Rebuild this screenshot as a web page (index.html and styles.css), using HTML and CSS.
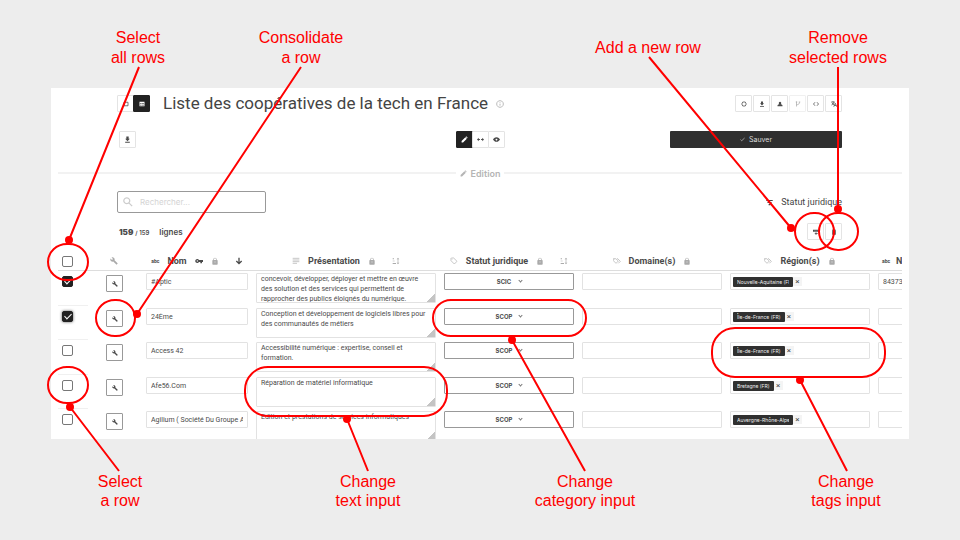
FILE: index.html
```html
<!DOCTYPE html>
<html lang="fr">
<head>
<meta charset="utf-8">
<meta name="viewport" content="width=device-width, initial-scale=1">
<title>Liste des coopératives de la tech en France</title>
<link rel="stylesheet" href="styles.css">
</head>
<body>
<svg class="defs" aria-hidden="true">
  <symbol id="wrench" viewBox="0 0 24 24"><path d="M22.7 19l-9.1-9.1c.9-2.3.4-5-1.5-6.9-2-2-5-2.4-7.4-1.3L9 6 6 9 1.6 4.7C.4 7.1.9 10.1 2.900 12.100c1.900 1.900 4.600 2.400 6.900 1.500l9.100 9.100c.4.4 1 .4 1.400 0l2.300-2.300c.5-.4.5-1.100.1-1.400z"/></symbol>
  <symbol id="lock" viewBox="0 0 24 24"><path fill-rule="evenodd" d="M18 9h-1V7A5 5 0 0 0 7 7v2H6a2 2 0 0 0-2 2v10a2 2 0 0 0 2 2h12a2 2 0 0 0 2-2V11a2 2 0 0 0-2-2zM9 7a3 3 0 0 1 6 0v2H9zm1 7h4v1h-4zm0 3h4v1h-4z"/></symbol>
  <symbol id="tag" viewBox="0 0 24 24"><path fill="none" stroke="currentColor" stroke-width="2" d="M3 4v7l10 10 8-8L11 3H4zM7 7v1"/></symbol>
  <symbol id="tags" viewBox="0 0 24 24"><path fill="none" stroke="currentColor" stroke-width="2" d="M1 5v6l8 8 7-7-8-7zM12 5h2l8 8-6 6M5 8v1"/></symbol>
  <symbol id="sort" viewBox="0 0 24 24"><path d="M2 4h4v3H2zM2 11h6v2H2zM2 18h10v3H2zM17 7h-3l4-5 4 5h-3v10h3l-4 5-4-5h3z"/></symbol>
  <symbol id="pencil" viewBox="0 0 24 24"><path d="M2 22v-5L15 4l5 5L7 22zM16 3l2-2 5 5-2 2z"/></symbol>
  <symbol id="download" viewBox="0 0 24 24"><path d="M8 2h8v7h4l-8 9-8-9h4zM4 20h16v3H4z"/></symbol>
</svg>
<main class="board">
  <section class="panel">
    <header class="bar">
      <div class="group">
        <button class="sq" aria-label="Cartes"><svg viewBox="0 0 24 24"><path fill="none" stroke="currentColor" stroke-width="3" d="M4 5h16v14H4z"/></svg></button>
        <button class="sq dark" aria-label="Tableau"><svg viewBox="0 0 24 24"><path fill-rule="evenodd" d="M2 3h20v18H2zM5 9h5v3H5zm8 0h6v3h-6zm-8 6h5v3H5zm8 0h6v3h-6z"/></svg></button>
      </div>
      <h1>Liste des coopératives de la tech en France</h1>
      <svg class="info" viewBox="0 0 24 24"><path fill="none" stroke="currentColor" stroke-width="3" d="M12 2a10 10 0 1 0 .1 0zM12 7v2m0 2v6"/></svg>
      <div class="actions">
        <button class="sq" aria-label="Plateforme"><svg viewBox="0 0 24 24"><path fill="none" stroke="currentColor" stroke-width="3" d="M7 4h10l4 8-4 8H7l-4-8z"/></svg></button>
        <button class="sq" aria-label="Télécharger"><svg><use href="#download"/></svg></button>
        <button class="sq" aria-label="Utilisateur"><svg viewBox="0 0 24 24"><path d="M12 3a5 5 0 1 0 .1 0zM2 21v-3c0-3 5-5 10-5s10 2 10 5v3z"/></svg></button>
        <button class="sq faint" aria-label="Source"><svg viewBox="0 0 24 24"><path fill="none" stroke="currentColor" stroke-width="3" d="M6 2v20M6 15c8 0 11-3 12-10M15 4h6M3 4h6"/></svg></button>
        <button class="sq" aria-label="Intégrer"><svg viewBox="0 0 24 24"><path fill="none" stroke="currentColor" stroke-width="3" d="M8 5l-6 7 6 7M16 5l6 7-6 7"/></svg></button>
        <button class="sq" aria-label="Traduire"><svg viewBox="0 0 24 24"><path fill="none" stroke="currentColor" stroke-width="3" d="M1 4h14M8 1v3M12 4c-1 6-5 10-10 12M4 7c2 4 5 7 8 8M11 23l6-14 6 14M13 18h8"/></svg></button>
      </div>
    </header>

    <div class="bar modes">
      <div><button class="sq" aria-label="Importer"><svg><use href="#download"/></svg></button></div>
      <div class="group">
        <button class="sq dark" aria-label="Éditer"><svg><use href="#pencil"/></svg></button>
        <button class="sq" aria-label="Comparer"><svg viewBox="0 0 24 24"><path d="M0 12l6-6v4h4v4H6v4zM24 12l-6-6v4h-4v4h4v4z"/></svg></button>
        <button class="sq" aria-label="Aperçu"><svg viewBox="0 0 24 24"><path fill-rule="evenodd" d="M12 4C6 4 2 8 0 12c2 4 6 8 12 8s10-4 12-8c-2-4-6-8-12-8zm0 5a3 3 0 1 1-.1 0z"/></svg></button>
      </div>
      <button class="save"><svg viewBox="0 0 24 24"><path fill="none" stroke="currentColor" stroke-width="3" d="M2 12l6 6L22 5"/></svg>Sauver</button>
    </div>

    <div class="divider"><svg><use href="#pencil"/></svg><span>Edition</span></div>

    <div class="bar tools">
      <label class="search"><svg viewBox="0 0 24 24"><path fill="none" stroke="currentColor" stroke-width="3" d="M9 2a7 7 0 1 0 .1 0zM14 14l8 8"/></svg><input type="search" placeholder="Rechercher..." aria-label="Rechercher"></label>
      <a class="filter" href="#"><svg viewBox="0 0 24 24"><path d="M1 3h22v4H1zM5 10h14v4H5zM9 17h6v4H9z"/></svg>Statut juridique</a>
    </div>

    <div class="bar count">
      <p><b>159</b> <small>/ 159</small> <span>lignes</span></p>
      <div class="actions">
        <button class="sq" aria-label="Ajouter une ligne"><svg viewBox="0 0 24 24"><path d="M0 3h24v8H0zM10 14h4v3h5v3h-5v3h-4v-3H7v-3h3z"/><path fill="none" stroke="#fff" d="M8 3v8M16 3v8"/></svg></button>
        <button class="sq" aria-label="Supprimer les lignes"><svg viewBox="0 0 24 24"><path d="M4 3h5l1-2h4l1 2h5v3H4zM5 7h14v16H5z"/></svg></button>
      </div>
    </div>

    <div class="viewport">
    <table>
      <colgroup><col class="c-check"><col class="c-tool"><col class="c-name"><col class="c-text"><col class="c-status"><col class="c-tags"><col class="c-tags"><col></colgroup>
      <thead>
        <tr>
          <th class="check"><input type="checkbox" aria-label="Tout sélectionner"></th>
          <th class="tool"><svg class="pale"><use href="#wrench"/></svg></th>
          <th><div class="head"><i>abc</i>Nom<svg viewBox="0 0 24 24"><path fill-rule="evenodd" d="M7 6a6 6 0 1 0 5 9h4v4h5v-4h3V9H12a6 6 0 0 0-5-3zm0 4a2 2 0 1 1-.1 0z"/></svg><svg class="pale lock"><use href="#lock"/></svg><svg class="far" viewBox="0 0 24 24"><path fill="none" stroke="currentColor" stroke-width="4" d="M12 2v18M4 12l8 8 8-8"/></svg></div></th>
          <th><div class="head"><svg class="pale" viewBox="0 0 24 24"><path fill="none" stroke="currentColor" stroke-width="2" d="M2 4h20M2 9h20M2 14h20M2 19h13"/></svg>Présentation<svg class="pale lock"><use href="#lock"/></svg><svg class="pale far"><use href="#sort"/></svg></div></th>
          <th><div class="head"><svg class="pale"><use href="#tag"/></svg>Statut juridique<svg class="pale lock"><use href="#lock"/></svg><svg class="pale far"><use href="#sort"/></svg></div></th>
          <th><div class="head"><svg class="pale"><use href="#tags"/></svg>Domaine(s)<svg class="pale lock"><use href="#lock"/></svg></div></th>
          <th><div class="head"><svg class="pale"><use href="#tags"/></svg>Région(s)<svg class="pale lock"><use href="#lock"/></svg></div></th>
          <th><div class="head cut"><i>abc</i>N</div></th>
        </tr>
      </thead>
      <tbody>
        <tr>
          <td class="check"><input type="checkbox" checked aria-label="Sélectionner #Aptic"></td>
          <td class="tool"><button aria-label="Consolider"><svg><use href="#wrench"/></svg></button></td>
          <td><input class="field" value="#Aptic" aria-label="Nom"></td>
          <td><textarea aria-label="Présentation">concevoir, développer, déployer et mettre en œuvre
des solution et des services qui permettent de
rapprocher des publics éloignés du numérique.</textarea></td>
          <td><div class="pick"><select aria-label="Statut juridique"><option>SCIC</option></select></div></td>
          <td><input class="field" aria-label="Domaines"></td>
          <td><div class="field tagbox"><span class="tag">Nouvelle-Aquitaine (FR)</span><button aria-label="Retirer">×</button></div></td>
          <td><input class="field wide" value="84373" aria-label="Numéro"></td>
        </tr>
        <tr>
          <td class="check"><input class="focus" type="checkbox" checked aria-label="Sélectionner 24Ème"></td>
          <td class="tool"><button aria-label="Consolider"><svg><use href="#wrench"/></svg></button></td>
          <td><input class="field" value="24Ème" aria-label="Nom"></td>
          <td><textarea aria-label="Présentation">Conception et développement de logiciels libres pour
des communautés de métiers</textarea></td>
          <td><div class="pick"><select aria-label="Statut juridique"><option>SCOP</option></select></div></td>
          <td><input class="field" aria-label="Domaines"></td>
          <td><div class="field tagbox"><span class="tag">Île-de-France (FR)</span><button aria-label="Retirer">×</button></div></td>
          <td><input class="field wide" aria-label="Numéro"></td>
        </tr>
        <tr>
          <td class="check"><input type="checkbox" aria-label="Sélectionner Access 42"></td>
          <td class="tool"><button aria-label="Consolider"><svg><use href="#wrench"/></svg></button></td>
          <td><input class="field" value="Access 42" aria-label="Nom"></td>
          <td><textarea aria-label="Présentation">Accessibilité numérique : expertise, conseil et
formation.</textarea></td>
          <td><div class="pick"><select aria-label="Statut juridique"><option>SCOP</option></select></div></td>
          <td><input class="field" aria-label="Domaines"></td>
          <td><div class="field tagbox"><span class="tag">Île-de-France (FR)</span><button aria-label="Retirer">×</button></div></td>
          <td><input class="field wide" aria-label="Numéro"></td>
        </tr>
        <tr>
          <td class="check"><input type="checkbox" aria-label="Sélectionner Afe56.Com"></td>
          <td class="tool"><button aria-label="Consolider"><svg><use href="#wrench"/></svg></button></td>
          <td><input class="field" value="Afe56.Com" aria-label="Nom"></td>
          <td><textarea aria-label="Présentation">Réparation de matériel informatique</textarea></td>
          <td><div class="pick"><select aria-label="Statut juridique"><option>SCOP</option></select></div></td>
          <td><input class="field" aria-label="Domaines"></td>
          <td><div class="field tagbox"><span class="tag">Bretagne (FR)</span><button aria-label="Retirer">×</button></div></td>
          <td><input class="field wide" aria-label="Numéro"></td>
        </tr>
        <tr>
          <td class="check"><input type="checkbox" aria-label="Sélectionner Agilium"></td>
          <td class="tool"><button aria-label="Consolider"><svg><use href="#wrench"/></svg></button></td>
          <td><input class="field" value="Agilium ( Société Du Groupe A" aria-label="Nom"></td>
          <td><textarea aria-label="Présentation">Edition et prestations de services informatiques</textarea></td>
          <td><div class="pick"><select aria-label="Statut juridique"><option>SCOP</option></select></div></td>
          <td><input class="field" aria-label="Domaines"></td>
          <td><div class="field tagbox"><span class="tag">Auvergne-Rhône-Alpes</span><button aria-label="Retirer">×</button></div></td>
          <td><input class="field wide" aria-label="Numéro"></td>
        </tr>
      </tbody>
    </table>
    </div>
  </section>

  <!-- Callouts drawn over the panel -->
  <svg class="callouts" viewBox="0 0 960 540" lang="en">
    <g class="rings">
      <rect x="48" y="244" width="40" height="36" rx="19"/>
      <rect x="96" y="300" width="39" height="36" rx="19"/>
      <rect x="795" y="213" width="39" height="37" rx="19"/>
      <rect x="819" y="213" width="39" height="37" rx="19"/>
      <rect x="48" y="367" width="40" height="36" rx="19"/>
      <rect x="433" y="300" width="153" height="36" rx="18"/>
      <rect x="245" y="367" width="202" height="49" rx="23"/>
      <rect x="712" y="328" width="173" height="49" rx="23"/>
      <path d="M139 67L69 240M301 67L137 314M649 57L791 228M838 67V208M70 407L119 471M347 419L368 471M512 340L585 471M800 380L847 471"/>
    </g>
    <g class="dots">
      <circle cx="69" cy="240" r="4"/><circle cx="137" cy="314" r="4"/><circle cx="791" cy="228" r="4"/><circle cx="838" cy="209" r="4"/>
      <circle cx="70" cy="407" r="4"/><circle cx="347" cy="419" r="4"/><circle cx="512" cy="340" r="4"/><circle cx="800" cy="380" r="4"/>
    </g>
    <g class="notes">
      <text x="138" y="43">Select</text><text x="138" y="63">all rows</text>
      <text x="301" y="43">Consolidate</text><text x="301" y="63">a row</text>
      <text x="648" y="53">Add a new row</text>
      <text x="838" y="43">Remove</text><text x="838" y="63">selected rows</text>
      <text x="120" y="487">Select</text><text x="120" y="506">a row</text>
      <text x="368" y="487">Change</text><text x="368" y="506">text input</text>
      <text x="585" y="487">Change</text><text x="585" y="506">category input</text>
      <text x="846" y="487">Change</text><text x="846" y="506">tags input</text>
    </g>
  </svg>
</main>
</body>
</html>
```
FILE: styles.css
```css
*, *::before, *::after { box-sizing: border-box; }

body {
  margin: 0;
  background: #ededed;
  color: #4a4a4a;
  font-family: Inter, "Liberation Sans", sans-serif;
  font-size: 8px;
}

button, input, select, textarea { font-family: inherit; color: inherit; margin: 0; padding: 0; }
svg { fill: currentColor; }
h1, p { margin: 0; }

.defs { display: none; }

.board { position: relative; padding: 88px 51px; }
.panel { background: #fff; padding: 7px 7px 0; }

.bar { display: flex; align-items: center; padding: 0 60px 0 59px; }
.group { display: flex; }
.actions { display: flex; gap: 1px; margin-left: auto; }

.sq {
  display: flex; align-items: center; justify-content: center;
  width: 17px; height: 17px;
  background: #fff; border: 1px solid #e4e4e4; border-radius: 1px;
}
.group .sq + .sq { margin-left: -1px; }
.sq svg { width: 6px; height: 6px; }
.sq.dark { background: #222; border-color: #222; color: #fff; }
.sq.faint { color: #aaa; border-color: #f0f0f0; }

h1 { margin-left: 13px; font-family: Roboto, "Liberation Sans", sans-serif; font-size: 17px; line-height: 17px; font-weight: 400; color: #444; }
.info { width: 8px; height: 8px; margin-left: 8px; color: #bbb; }

.modes { display: grid; grid-template-columns: 1fr auto 1fr; margin-top: 19px; padding-left: 61px; padding-right: 60px; }
.modes .group { margin-left: -1px; }
.modes .sq svg { width: 7px; height: 7px; }
.save {
  display: flex; align-items: center; justify-content: center; gap: 4px;
  justify-self: end; width: 172px; height: 17px;
  background: #2f2f2f; color: #ddd; border: 0; border-radius: 1px; font-size: 7px;
}
.save svg { width: 5px; height: 5px; }

.divider {
  display: flex; align-items: center; gap: 4px;
  margin-top: 18px; height: 14px;
  color: #b5b5b5; font-size: 9px; font-weight: 600;
}
.divider::before, .divider::after { content: ""; flex: 1; height: 2px; background: #f2f2f2; }
.divider svg { width: 7px; height: 7px; }

.tools { margin-top: 11px; justify-content: space-between; }
.search {
  display: flex; align-items: center; gap: 7px;
  width: 149px; height: 22px; padding: 0 5px;
  border: 1px solid #999; border-radius: 2px; color: #ccc;
}
.search svg { width: 10px; height: 10px; flex: none; }
.search input { width: 100%; min-width: 0; border: 0; outline: 0; background: none; font-size: 8px; }
.search input::placeholder { color: #d4d4d4; }
.filter { display: flex; align-items: center; gap: 8px; color: #444; text-decoration: none; font-family: Roboto, sans-serif; font-size: 9px; }
.filter svg { width: 7px; height: 7px; }

.count { margin-top: 10px; padding-left: 61px; }
.count p { font-size: 8px; font-weight: 600; }
.count small { font-size: 6px; }
.count span { margin-left: 4px; padding-left: 4px; }

.viewport { height: 188px; margin-top: 11px; overflow: hidden; }
table { width: 100%; table-layout: fixed; border-collapse: separate; border-spacing: 0; }
.c-check { width: 30px; }
.c-tool { width: 54px; }
.c-name { width: 110px; }
.c-text { width: 188px; }
.c-status { width: 138px; }
.c-tags { width: 148px; }

th { height: 20px; padding: 0; border-bottom: 1px solid #ddd; font-family: Roboto, sans-serif; font-size: 9px; font-weight: 700; overflow: hidden; }
th svg { width: 8px; height: 8px; }
th svg.lock { width: 8px; }
.head { display: flex; align-items: center; justify-content: center; gap: 8px; }
.head i { font-size: 5px; font-style: normal; }
.head .far { margin-left: 8px; }
.head.cut { justify-content: start; padding-left: 8px; gap: 6px; }
.pale { color: #aaa; }

td { height: 35px; padding: 2px 4px 0; vertical-align: top; overflow: hidden; }
tr:nth-child(even) td { height: 34px; }
td.check { padding: 5px 0 0 4px; border-bottom: 1px solid #f0f0f0; }
th.check { padding: 2px 0 0 4px; text-align: left; }
td.tool { padding: 4px 0 0 18px; text-align: left; }
th.tool { padding: 2px 0 0 22px; text-align: left; }

.check input {
  display: block; appearance: none; width: 11px; height: 11px;
  border: 1px solid #777; border-radius: 2px; background: #fff;
}
.check input:checked { background: #222; border-color: #222; }
.check input:checked::after {
  content: ""; display: block; width: 4px; height: 7px; margin: 0 auto;
  border: solid #fff; border-width: 0 1px 1px 0; transform: rotate(45deg);
}
.check input.focus { box-shadow: 0 0 3px #555; }

.tool button {
  display: flex; align-items: center; justify-content: center;
  width: 17px; height: 17px; background: #fff; border: 1px solid #999; border-radius: 1px;
}
.tool button svg { width: 6px; height: 6px; }

.field, textarea {
  display: block; width: 100%; background: #fff;
  border: 1px solid #e2e2e2; border-radius: 1px; outline: 0;
  font-family: Roboto, "Liberation Sans", sans-serif;
}
.field { height: 17px; padding: 0 4px; font-size: 7px; }
.field.wide { width: 60px; }
textarea {
  height: 30px; padding: 0 4px; font-size: 7px; line-height: 10px;
  resize: none; overflow: hidden; white-space: pre;
  background: linear-gradient(135deg, transparent 50%, #c4c4c4 50%) right bottom / 8px 8px no-repeat;
}

.pick { position: relative; }
.pick select {
  display: block; appearance: none; width: 100%; height: 17px; padding-right: 10px;
  background: #fff; border: 1px solid #999; border-radius: 1px;
  font-size: 6px; font-weight: 700; text-align: center; text-align-last: center;
}
.pick::after {
  content: ""; position: absolute; left: 58%; top: 6px; width: 3px; height: 3px;
  border: solid #777; border-width: 0 1px 1px 0; transform: rotate(45deg);
}

.tagbox { display: flex; align-items: center; padding: 0 2px; }
.tag {
  max-width: 60px; height: 10px; overflow: hidden; white-space: nowrap;
  border: solid #303030; border-width: 0 4px; border-radius: 1px;
  background: #303030; color: #eee; font-family: Inter, sans-serif; font-size: 5px; line-height: 10px;
}
.tagbox button { width: 9px; height: 9px; border: 0; background: #f4f4f4; font-size: 8px; line-height: 8px; }

.callouts { position: absolute; left: 0; top: 0; width: 100%; height: auto; pointer-events: none; }
.rings { fill: none; stroke: #f00; stroke-width: 2; }
.dots { fill: #f00; }
.notes { fill: #f00; font-family: "Liberation Sans", Arial, sans-serif; font-size: 16px; text-anchor: middle; }
```
